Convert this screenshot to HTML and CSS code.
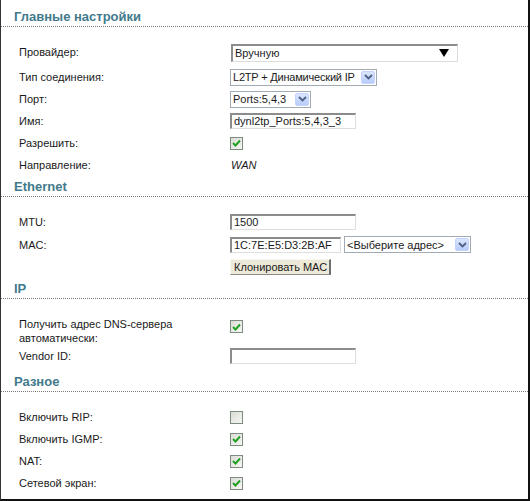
FILE: index.html
```html
<!DOCTYPE html>
<html lang="ru">
<head>
<meta charset="utf-8">
<title>Настройки соединения</title>
<link rel="stylesheet" href="styles.css">
</head>
<body>
<div class="panel">
  <section class="section">
    <h2 class="section-title">Главные настройки</h2>
    <div class="section-body">
      <div class="row row-first">
        <div class="label">Провайдер:</div>
        <div class="control">
          <div class="select-flat"><span class="select-text">Вручную</span><span class="flat-arrow"></span></div>
        </div>
      </div>
      <div class="row">
        <div class="label">Тип соединения:</div>
        <div class="control">
          <div class="select-xp select-type"><span class="select-text">L2TP + Динамический IP</span><span class="xp-btn"><svg viewBox="0 0 9 6" width="9" height="6"><path d="M1 1 L4.5 4.5 L8 1" fill="none" stroke="#4d6185" stroke-width="1.8"/></svg></span></div>
        </div>
      </div>
      <div class="row">
        <div class="label">Порт:</div>
        <div class="control">
          <div class="select-xp select-port"><span class="select-text">Ports:5,4,3</span><span class="xp-btn"><svg viewBox="0 0 9 6" width="9" height="6"><path d="M1 1 L4.5 4.5 L8 1" fill="none" stroke="#4d6185" stroke-width="1.8"/></svg></span></div>
        </div>
      </div>
      <div class="row">
        <div class="label">Имя:</div>
        <div class="control"><div class="text-input">dynl2tp_Ports:5,4,3_3</div></div>
      </div>
      <div class="row">
        <div class="label">Разрешить:</div>
        <div class="control"><span class="checkbox checked"><svg viewBox="0 0 9 8" width="9" height="8"><path d="M1 4 L3.5 6.5 L8 1.5" fill="none" stroke="#21a121" stroke-width="2"/></svg></span></div>
      </div>
      <div class="row">
        <div class="label">Направление:</div>
        <div class="control"><span class="static-italic">WAN</span></div>
      </div>
    </div>
  </section>

  <section class="section">
    <h2 class="section-title">Ethernet</h2>
    <div class="section-body">
      <div class="row">
        <div class="label">MTU:</div>
        <div class="control"><div class="text-input">1500</div></div>
      </div>
      <div class="row row-tall">
        <div class="label">MAC:</div>
        <div class="control control-gap">
          <div class="text-input input-mac">1C:7E:E5:D3:2B:AF</div>
          <div class="select-xp select-mac"><span class="select-text">&lt;Выберите адрес&gt;</span><span class="xp-btn"><svg viewBox="0 0 9 6" width="9" height="6"><path d="M1 1 L4.5 4.5 L8 1" fill="none" stroke="#4d6185" stroke-width="1.8"/></svg></span></div>
        </div>
      </div>
      <div class="row">
        <div class="label"></div>
        <div class="control"><span class="button">Клонировать МАС</span></div>
      </div>
    </div>
  </section>

  <section class="section section-ip">
    <h2 class="section-title">IP</h2>
    <div class="section-body">
      <div class="row row-multi">
        <div class="label label-multi">Получить адрес DNS-сервера<br>автоматически:</div>
        <div class="control control-top"><span class="checkbox checked"><svg viewBox="0 0 9 8" width="9" height="8"><path d="M1 4 L3.5 6.5 L8 1.5" fill="none" stroke="#21a121" stroke-width="2"/></svg></span></div>
      </div>
      <div class="row">
        <div class="label">Vendor ID:</div>
        <div class="control"><div class="text-input"></div></div>
      </div>
    </div>
  </section>

  <section class="section">
    <h2 class="section-title title-misc">Разное</h2>
    <div class="section-body">
      <div class="row">
        <div class="label">Включить RIP:</div>
        <div class="control"><span class="checkbox"></span></div>
      </div>
      <div class="row">
        <div class="label">Включить IGMP:</div>
        <div class="control"><span class="checkbox checked"><svg viewBox="0 0 9 8" width="9" height="8"><path d="M1 4 L3.5 6.5 L8 1.5" fill="none" stroke="#21a121" stroke-width="2"/></svg></span></div>
      </div>
      <div class="row">
        <div class="label">NAT:</div>
        <div class="control"><span class="checkbox checked"><svg viewBox="0 0 9 8" width="9" height="8"><path d="M1 4 L3.5 6.5 L8 1.5" fill="none" stroke="#21a121" stroke-width="2"/></svg></span></div>
      </div>
      <div class="row">
        <div class="label">Сетевой экран:</div>
        <div class="control"><span class="checkbox checked"><svg viewBox="0 0 9 8" width="9" height="8"><path d="M1 4 L3.5 6.5 L8 1.5" fill="none" stroke="#21a121" stroke-width="2"/></svg></span></div>
      </div>
    </div>
  </section>
</div>
</body>
</html>
```

FILE: styles.css
```css
* { box-sizing: border-box; }

html, body {
  margin: 0;
  padding: 0;
  background: #ffffff;
}

body {
  font-family: "Liberation Sans", Arial, sans-serif;
  font-size: 11px;
  color: #1a1a1a;
}

.panel {
  width: 530px;
  height: 501px;
  padding-top: 6px;
  border-left: 1px solid #333333;
  border-right: 2px solid #111111;
  border-bottom: 2px solid #111111;
  background: #ffffff;
  overflow: hidden;
}

.section-title {
  margin: 0;
  padding: 2px 0 0 13px;
  height: 21px;
  line-height: 18px;
  font-size: 13px;
  font-weight: bold;
  color: #427a8c;
  border-bottom: 1px dotted #7a7a7a;
}

.title-misc {
  height: 25px;
  padding-top: 6px;
}

.section-body {
  padding-top: 14px;
}

.row {
  display: flex;
  align-items: center;
  height: 22px;
}

.row-first { margin-bottom: 3px; }
.row-tall { height: 23px; }

.row-multi {
  height: 32px;
  align-items: flex-start;
}

.label {
  width: 229px;
  flex: none;
  padding-left: 18px;
  white-space: nowrap;
}

.label-multi {
  padding-top: 4px;
  line-height: 14px;
}

.control {
  display: flex;
  align-items: center;
}

.control-gap { gap: 3px; }

.control-top { padding-top: 7px; }

.select-text {
  flex: 1;
  white-space: nowrap;
  padding-left: 2px;
}

.select-type .select-text {
  letter-spacing: -0.2px;
}

/* flat provider select */
.select-flat {
  display: flex;
  align-items: center;
  width: 227px;
  height: 18px;
  margin-left: 1px;
  margin-top: 1px;
  background: #ffffff;
  border-top: 2px solid #8c8c8c;
  border-left: 2px solid #8c8c8c;
  border-right: 1px solid #dcdcdc;
  border-bottom: 1px solid #dcdcdc;
}

.flat-arrow {
  width: 0;
  height: 0;
  margin-right: 8px;
  border-left: 5px solid transparent;
  border-right: 5px solid transparent;
  border-top: 8px solid #000000;
}

/* XP-style select */
.select-xp {
  display: flex;
  align-items: center;
  height: 17px;
  background: #ffffff;
  border: 1px solid #a2aab3;
  padding-right: 1px;
}

.select-type { width: 147px; }
.select-port { width: 81px; }
.select-mac { width: 127px; }

.xp-btn {
  display: flex;
  flex: none;
  align-items: center;
  justify-content: center;
  width: 14px;
  height: 13px;
  border: 1px solid #c3d3fd;
  border-radius: 2px;
  background: linear-gradient(#dbe5fd, #b8ccf9);
}

/* text inputs */
.text-input {
  width: 126px;
  height: 16px;
  line-height: 13px;
  padding-left: 2px;
  background: #ffffff;
  border-top: 2px solid #8c8c8c;
  border-left: 2px solid #8c8c8c;
  border-right: 1px solid #dedede;
  border-bottom: 1px solid #dedede;
  white-space: nowrap;
  overflow: hidden;
}

.input-mac { width: 111px; }

/* checkbox */
.checkbox {
  display: inline-flex;
  align-items: center;
  justify-content: center;
  width: 13px;
  height: 13px;
  border: 1px solid #7d8b80;
  background: linear-gradient(135deg, #dcdcd6, #f6f6f4);
}

.static-italic {
  font-style: italic;
  padding-left: 1px;
}

/* button */
.button {
  display: inline-block;
  height: 16px;
  line-height: 14px;
  padding: 0 2px 0 3px;
  background: #ece9d8;
  border-top: 1px solid #f7f6ef;
  border-left: 1px solid #f7f6ef;
  border-right: 2px solid #6f6f6f;
  border-bottom: 1px solid #8a8a8a;
  white-space: nowrap;
}
```
